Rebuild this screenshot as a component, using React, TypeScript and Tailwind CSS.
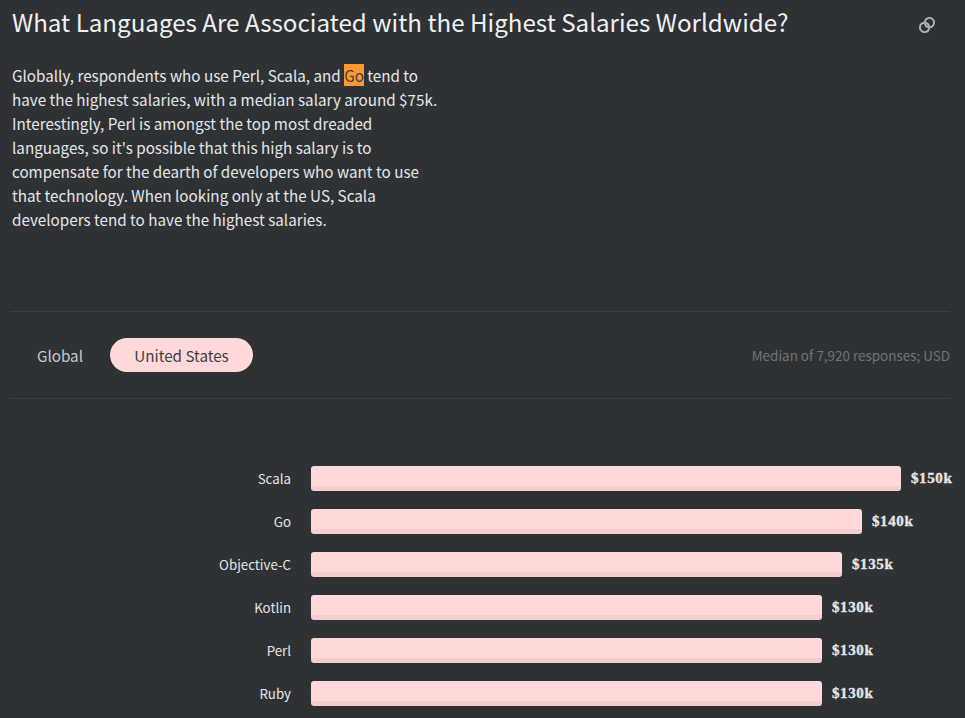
const rows = [
  { name: "Scala", width: 590, value: "$150k" },
  { name: "Go", width: 551, value: "$140k" },
  { name: "Objective-C", width: 531, value: "$135k" },
  { name: "Kotlin", width: 511, value: "$130k" },
  { name: "Perl", width: 511, value: "$130k" },
  { name: "Ruby", width: 511, value: "$130k" },
];

function LinkIcon() {
  return (
    <svg width="18" height="18" viewBox="0 0 18 18" fill="none" stroke="#b0b4b7" strokeWidth="1.9" strokeLinecap="round">
      <path d="M6.93 5.15A4.7 4.7 0 1 1 6.93 8.05" />
      <path d="M11.07 12.85A4.7 4.7 0 1 1 11.07 9.95" />
    </svg>
  );
}

export default function App() {
  return (
    <div className="h-[718px] w-[965px] overflow-hidden bg-[#2f3235] font-['Noto_Sans_CJK_JP',sans-serif] text-[#e4e6e8]">
      <div className="flex items-start justify-between pl-3 pr-[29px] pt-[5px]">
        <h1 className="text-[24.17px] leading-[33px] text-[#eff0f1]">What Languages Are Associated with the Highest Salaries Worldwide?</h1>
        <div className="mt-[11px]"><LinkIcon /></div>
      </div>
      <p className="ml-3 mt-[25px] h-[248px] w-[440px] text-[15.22px] leading-[24px]">
        Globally, respondents who use Perl, Scala, and <span className="bg-[#ff9a33] text-[#3b3d3f]">Go</span> tend to<br />
        have the highest salaries, with a median salary around $75k.<br />
        Interestingly, Perl is amongst the top most dreaded<br />
        languages, so it's possible that this high salary is to<br />
        compensate for the dearth of developers who want to use<br />
        that technology. When looking only at the US, Scala<br />
        developers tend to have the highest salaries.
      </p>
      <div className="mx-[10px] w-[940px] flex h-[88px] items-center justify-between border-y border-[#3d4043]">
        <div className="flex items-center gap-[27px] pl-[27px] text-[15.2px]">
          <span className="text-[#c4c8cb]">Global</span>
          <span className="flex h-[34px] w-[143px] items-center justify-center rounded-full bg-[#ffd9d9] text-[#3c4043]">United States</span>
        </div>
        <span className="text-[13.45px] text-[#6c7379]">Median of 7,920 responses; USD</span>
      </div>
      <div className="mt-[67px] flex flex-col gap-[18px]">
        {rows.map((r) => (
          <div key={r.name} className="flex h-[25px] items-center">
            <div className="w-[291px] text-right text-[13.3px] text-[#e4e6e8]">{r.name}</div>
            <div className="ml-5 h-[25px] rounded-[3px] border-b-[5px] border-[#f5cdcd] bg-[#ffd9d9]" style={{ width: r.width }} />
            <div className="ml-[10px] font-['Liberation_Serif',serif] text-[15px] font-bold tracking-[0.6px] text-[#e4e6e8] [-webkit-text-stroke:0.35px_#e4e6e8]">{r.value}</div>
          </div>
        ))}
      </div>
    </div>
  );
}
